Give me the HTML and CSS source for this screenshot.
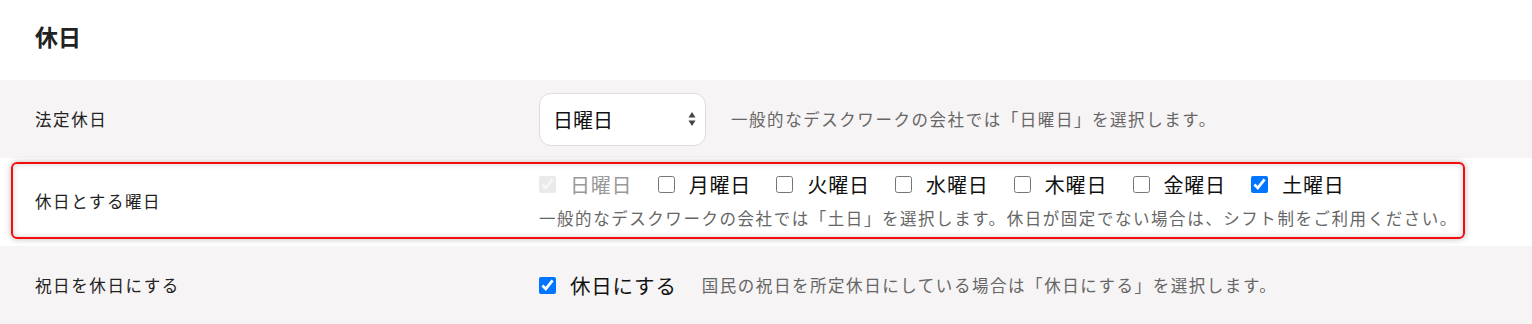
FILE: index.html
```html
<!DOCTYPE html>
<html lang="ja">
<head>
<meta charset="utf-8">
<title>休日</title>
<link rel="stylesheet" href="styles.css">
</head>
<body>
<div class="page">
  <header class="head"><h2 class="title">休日</h2></header>

  <div class="row grey">
    <div class="label">法定休日</div>
    <div class="value inline">
      <div class="select-wrap">
        <select class="select"><option>日曜日</option><option>月曜日</option></select>
        <svg class="arrows" width="8" height="16" viewBox="0 0 8 16"><path d="M4 1 L7.5 6.5 H0.5 Z" fill="#444"/><path d="M4 15 L7.5 9.5 H0.5 Z" fill="#444"/></svg>
      </div>
      <p class="help">一般的なデスクワークの会社では「日曜日」を選択します。</p>
    </div>
  </div>

  <div class="row-hl">
    <div class="hl-box">
      <div class="label">休日とする曜日</div>
      <div class="value">
        <div class="days">
          <label class="day disabled"><input type="checkbox" checked disabled><span>日曜日</span></label>
          <label class="day"><input type="checkbox"><span>月曜日</span></label>
          <label class="day"><input type="checkbox"><span>火曜日</span></label>
          <label class="day"><input type="checkbox"><span>水曜日</span></label>
          <label class="day"><input type="checkbox"><span>木曜日</span></label>
          <label class="day"><input type="checkbox"><span>金曜日</span></label>
          <label class="day"><input type="checkbox" checked><span>土曜日</span></label>
        </div>
        <p class="help help-block">一般的なデスクワークの会社では「土日」を選択します。休日が固定でない場合は、シフト制をご利用ください。</p>
      </div>
    </div>
  </div>

  <div class="row grey">
    <div class="label">祝日を休日にする</div>
    <div class="value inline">
      <label class="day big"><input type="checkbox" checked><span>休日にする</span></label>
      <p class="help help-h">国民の祝日を所定休日にしている場合は「休日にする」を選択します。</p>
    </div>
  </div>
</div>
</body>
</html>
```

FILE: styles.css
```css
html, body {
  margin: 0;
  padding: 0;
  background: #fff;
}
body {
  font-family: "Noto Sans CJK JP", "Noto Sans", sans-serif;
  color: #333;
}
.page {
  width: 1532px;
}
.head {
  height: 80px;
  display: flex;
  align-items: center;
  padding-left: 35px;
}
.title {
  margin: 0;
  font-size: 23px;
  font-weight: 700;
  color: #222;
  line-height: 1;
  margin-top: -7px;
}
.row {
  display: grid;
  grid-template-columns: 504px 1fr;
  align-items: center;
  padding-left: 35px;
  height: 78px;
}
.grey {
  background: #f6f4f4;
}
.label {
  font-size: 16.5px;
  letter-spacing: 1.6px;
  color: #222;
}
.value.inline {
  display: flex;
  align-items: center;
}
.select-wrap {
  position: relative;
  width: 167px;
  height: 53px;
}
.select {
  appearance: none;
  -webkit-appearance: none;
  width: 167px;
  height: 53px;
  margin: 0;
  border: 1px solid #dcdcdc;
  border-radius: 12px;
  background: #fff;
  padding: 0 0 0 13px;
  font-family: "Noto Sans CJK JP", sans-serif;
  font-size: 20px;
  color: #111;
  box-sizing: border-box;
}
.arrows {
  position: absolute;
  right: 10px;
  top: 18px;
  pointer-events: none;
}
.help {
  margin: 0 0 0 25px;
  font-size: 16.5px;
  letter-spacing: 1.55px;
  color: #666;
}
.row-hl {
  background: #fff;
  padding: 4px 67px 7px 11px;
}
.hl-box {
  display: grid;
  grid-template-columns: 504px 1fr;
  align-items: center;
  padding: 8px 0 7px 22px;
  border: 2px solid #f50d0d;
  border-radius: 6px;
  box-shadow: 0 0 6px rgba(0,0,0,0.28), inset 0 0 6px rgba(0,0,0,0.18);
}
.days {
  display: flex;
  height: 24px;
  align-items: center;
}
.day {
  display: flex;
  align-items: center;
  font-size: 20px;
  letter-spacing: 0.8px;
  color: #111;
  margin-right: 25.3px;
}
.day input {
  width: 17px;
  height: 17px;
  margin: 0 14px 0 0;
  accent-color: #0075ff;
}
.day.disabled span {
  color: #999;
}
.day.disabled input {
  opacity: 0.45;
}
.day.big {
  font-size: 20.5px;
  letter-spacing: 0.8px;
  margin-right: 0;
}
.help-block {
  margin: 10px 0 0 0;
  line-height: 24px;
}
.help-h {
  margin-left: 25px;
}
```
